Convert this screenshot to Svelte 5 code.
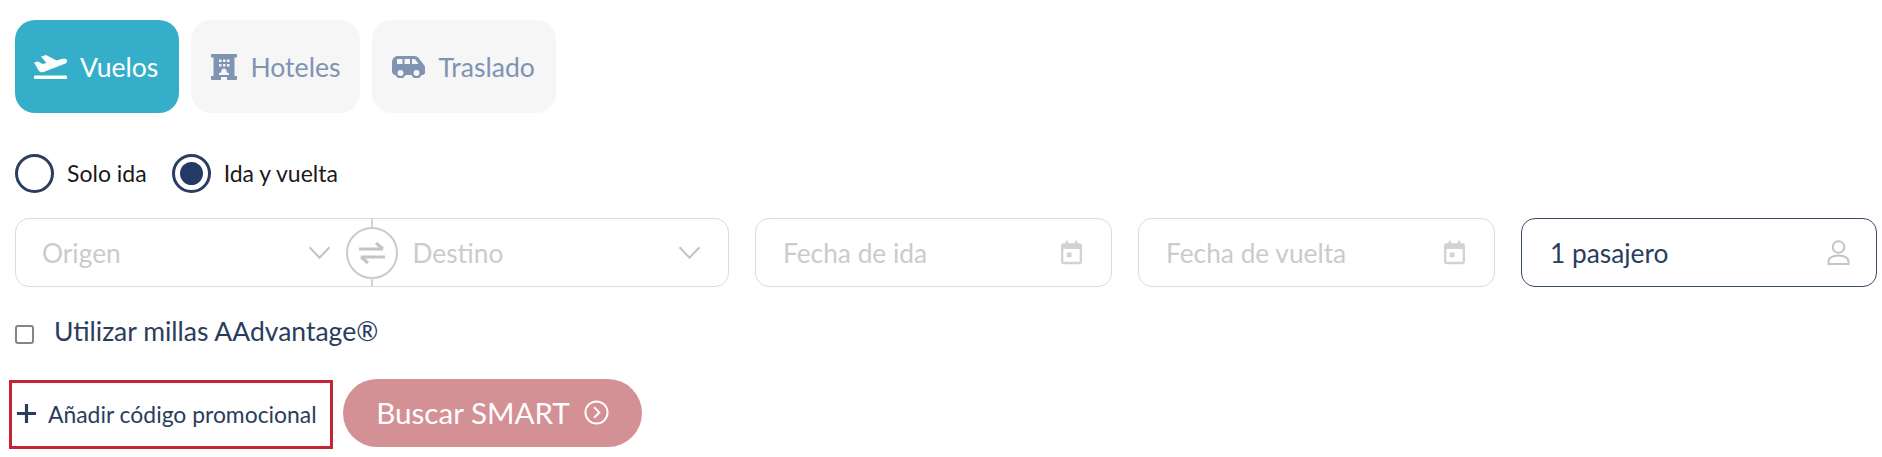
<script lang="ts">
  const tabs = [
    { label: "Vuelos", icon: "plane", active: true },
    { label: "Hoteles", icon: "hotel", active: false },
    { label: "Traslado", icon: "van", active: false },
  ];
</script>

<div class="search">
  <div class="tabs">
    {#each tabs as tab}
      <button type="button" class="tab" class:active={tab.active}>
        {#if tab.icon === "plane"}
          <svg class="tab-icon plane" viewBox="0 0 33 24">
            <path d="M0 7.500 4 6.500l4.500 2.500 4-1L7 1.500 12 0l10.500 5.500 5-1.500c2.500-.7 5-.3 5.500 1.200.4 1.800-1 3.300-3.500 4L9.500 17c-2 .6-3.500.2-4.500-1z" />
            <rect y="20.500" width="33" height="3.500" rx="1" />
          </svg>
        {:else if tab.icon === "hotel"}
          <svg class="tab-icon hotel" viewBox="0 0 26 26">
            <path fill-rule="evenodd" d="M1 0h24a1 1 0 0 1 1 1v2.500h-2.500V22H26v3a1 1 0 0 1-1 1H16v-3h-6v3H1a1 1 0 0 1-1-1v-3h2.500V3.500H0V1a1 1 0 0 1 1-1zM8 5.500V8h2.500V5.500zm4 0V8h2.500V5.500zm4 0V8h2.500V5.500zM8 10v2.500h2.500V10zm4 0v2.500h2.500V10zm4 0v2.500h2.500V10zM13 14.500c-1.500 0-2.400 1-2.600 2.500-.2 1.300-.9 2-2.400 2.200V21h10v-1.800c-1.500-.2-2.200-.9-2.400-2.200-.2-1.500-1.100-2.500-2.600-2.500z" />
          </svg>
        {:else}
          <svg class="tab-icon van" viewBox="0 0 33 22">
            <path fill-rule="evenodd" d="M6 0h16.500c2 0 3.500.9 4.500 2.500l5 6.500c.6.8 1 1.800 1 3v4.500c0 1.400-1.100 2.500-2.500 2.500H3.500C1.600 19 0 17.400 0 15.500V6c0-3.300 2.700-6 6-6zm-1 3v5h5.500V3zm7.500 0v5H18V3zm7.500 0v5h6.500l-3-4.200c-.4-.5-.9-.8-1.500-.8z" />
            <circle class="wheel" cx="8.500" cy="17" r="4.200" />
            <circle class="wheel" cx="24.500" cy="17" r="4.200" />
          </svg>
        {/if}
        {tab.label}
      </button>
    {/each}
  </div>

  <div class="trip">
    <span class="radio"></span>
    <span class="trip-label">Solo ida</span>
    <span class="radio on"><span class="dot"></span></span>
    <span class="trip-label">Ida y vuelta</span>
  </div>

  <div class="fields">
    <div class="field route">
      <div class="route-part">
        <span class="placeholder">Origen</span>
        <svg class="chevron" viewBox="0 0 22 14"><path d="M1.500 2 11 12l9.500-10" /></svg>
      </div>
      <div class="route-part second">
        <span class="placeholder">Destino</span>
        <svg class="chevron" viewBox="0 0 22 14"><path d="M1.500 2 11 12l9.500-10" /></svg>
      </div>
      <span class="swap">
        <svg viewBox="0 0 28 24"><path d="M1 8h24M18 2l7 6M27 16H3M10 22l-7-6" /></svg>
      </span>
    </div>

    <div class="field date">
      <span class="placeholder">Fecha de ida</span>
      <svg class="cal" viewBox="0 0 18 20"><path fill-rule="evenodd" d="M4 0h2v2h6V0h2v2h2a2 2 0 0 1 2 2v14a2 2 0 0 1-2 2H2a2 2 0 0 1-2-2V4a2 2 0 0 1 2-2h2zM2 7v11h14V7zm3 3h4v4H5z" /></svg>
    </div>
    <div class="field date">
      <span class="placeholder">Fecha de vuelta</span>
      <svg class="cal" viewBox="0 0 18 20"><path fill-rule="evenodd" d="M4 0h2v2h6V0h2v2h2a2 2 0 0 1 2 2v14a2 2 0 0 1-2 2H2a2 2 0 0 1-2-2V4a2 2 0 0 1 2-2h2zM2 7v11h14V7zm3 3h4v4H5z" /></svg>
    </div>
    <div class="field pax">
      <span class="pax-text">1 pasajero</span>
      <svg class="person" viewBox="0 0 23 25">
        <circle cx="11.500" cy="7" r="5.800" />
        <path d="M1.500 24v-2.500c0-3.500 4-6 10-6s10 2.500 10 6V24z" />
      </svg>
    </div>
  </div>

  <label class="miles">
    <input type="checkbox" />
    <span>Utilizar millas AAdvantage®</span>
  </label>

  <div class="actions">
    <div class="promo">
      <svg class="plus" viewBox="0 0 18 18"><path d="M9 0v18M0 9h18" /></svg>
      <span>Añadir código promocional</span>
    </div>
    <button type="button" class="go">
      Buscar SMART
      <svg class="go-icon" viewBox="0 0 26 26"><circle cx="13" cy="13" r="11.500" /><path d="m10.500 7.500 5.500 5.500-5.500 5.500" /></svg>
    </button>
  </div>
</div>

<style>
  :global(body) {
    background: #fff;
  }

  .search {
    box-sizing: border-box;
    width: 1882px;
    height: 457px;
    padding: 20px 5px 0 15px;
    font-family: Lato, "Open Sans", sans-serif;
    color: #2a3d5c;
    overflow: hidden;
  }

  .tabs {
    display: flex;
    gap: 12px;
    height: 93px;
  }

  .tab {
    display: flex;
    align-items: center;
    padding: 0 20px;
    border: 0;
    border-radius: 20px;
    background: #f6f6f7;
    color: #8093b2;
    font: 400 26.600px Lato, sans-serif;
  }

  .tab:first-child {
    padding-right: 21px;
  }

  .tab:last-child {
    padding-right: 21px;
  }

  .tab.active {
    background: #35afc9;
    color: #fff;
  }

  .tab-icon {
    fill: currentColor;
  }

  .plane {
    width: 33px;
    height: 24px;
    margin-left: -1px;
    margin-right: 13px;
  }

  .hotel {
    width: 26px;
    height: 26px;
    margin-right: 13px;
  }

  .van {
    width: 33px;
    height: 22px;
    margin-right: 13px;
  }

  .wheel {
    fill: #f6f6f7;
    stroke: #8093b2;
    stroke-width: 2.500;
  }

  .trip {
    display: flex;
    align-items: center;
    height: 42px;
    margin-top: 39px;
    font-size: 23px;
    color: #1a1a1a;
  }

  .radio {
    box-sizing: border-box;
    display: flex;
    align-items: center;
    justify-content: center;
    width: 39px;
    height: 39px;
    border: 3px solid #2b3e5e;
    border-radius: 50%;
  }

  .dot {
    width: 23px;
    height: 23px;
    border-radius: 50%;
    background: #223a66;
  }

  .trip-label {
    margin-left: 13px;
    margin-right: 25px;
  }

  .fields {
    display: flex;
    gap: 26px;
    margin-top: 24px;
  }

  .field {
    box-sizing: border-box;
    position: relative;
    display: flex;
    align-items: center;
    height: 69px;
    border: 1.5px solid #dcdcdc;
    border-radius: 14px;
    font-size: 26.300px;
  }

  .placeholder {
    color: #cbcbcb;
  }

  .route {
    width: 714px;
  }

  .route-part {
    display: flex;
    align-items: center;
    justify-content: space-between;
    flex: 1;
    padding: 0 16px 0 26px;
  }

  .route-part.second {
    padding-left: 41px;
    padding-right: 27px;
  }

  .route-part:first-child {
    padding-right: 41px;
  }

  .chevron {
    width: 23px;
    height: 15px;
    fill: none;
    stroke: #c4c4c4;
    stroke-width: 2;
  }

  /* sits over the seam between origin and destination */
  .swap {
    box-sizing: border-box;
    position: absolute;
    left: 330px;
    top: 8px;
    display: flex;
    align-items: center;
    justify-content: center;
    width: 52px;
    height: 52px;
    border: 2px solid #cbcbcb;
    border-radius: 50%;
    background: #fff;
  }

  .swap svg {
    width: 28px;
    height: 24px;
    fill: none;
    stroke: #c4c4c4;
    stroke-width: 3;
  }

  .route::before,
  .route::after {
    content: "";
    position: absolute;
    left: 355px;
    width: 1.500px;
    height: 9px;
    background: #d4d4d4;
  }

  .route::before {
    top: 0;
  }

  .route::after {
    bottom: 0;
  }

  .date,
  .pax {
    justify-content: space-between;
    padding: 0 28px;
    width: 357px;
  }

  .date {
    padding-left: 27px;
    padding-right: 29px;
  }

  .date .cal {
    width: 21px;
    height: 25px;
    fill: #d2d2d2;
  }

  .pax {
    border-color: #3a4b64;
    width: 356px;
    padding-right: 26px;
  }

  .pax-text {
    color: #2a3d5c;
  }

  .person {
    width: 23px;
    height: 25px;
    fill: none;
    stroke: #c4c4c4;
    stroke-width: 2;
  }

  .miles {
    display: flex;
    align-items: center;
    margin-top: 28px;
    font-size: 26.500px;
    color: #2a3d5c;
  }

  .miles input {
    box-sizing: border-box;
    width: 19px;
    height: 19px;
    margin: 6px 20px 0 0;
    appearance: none;
    border: 2px solid #858585;
    border-radius: 3px;
    background: #fff;
  }

  .actions {
    display: flex;
    align-items: flex-start;
    margin-top: 33px;
    margin-left: -6px;
  }

  .promo {
    box-sizing: border-box;
    display: flex;
    align-items: center;
    width: 324px;
    height: 69px;
    padding: 0 0 2px 5px;
    border: 3px solid #c42433;
    font-size: 22.900px;
    color: #2a3d5c;
  }

  .plus {
    width: 19px;
    height: 19px;
    margin-right: 12px;
    fill: none;
    stroke: #2a3d5c;
    stroke-width: 3;
  }

  .go {
    display: flex;
    align-items: center;
    justify-content: center;
    width: 299px;
    height: 68px;
    margin-left: 10px;
    margin-top: -1px;
    padding-bottom: 3px;
    border: 0;
    border-radius: 34px;
    background: #d39095;
    color: #fff;
    font: 400 29.600px Lato, sans-serif;
  }

  .go-icon {
    width: 25px;
    height: 25px;
    margin-left: 14px;
    fill: none;
    stroke: #fff;
    stroke-width: 2;
  }
</style>
